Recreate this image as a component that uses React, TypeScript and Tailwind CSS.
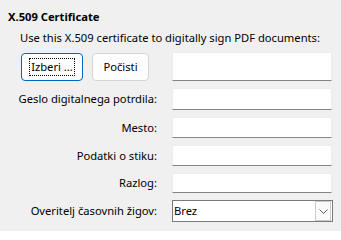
import React from "react";

const font = { fontFamily: '"Noto Sans", "Segoe UI", sans-serif' };

function Field({ h }: { h: string }) {
  return <div className={`w-[160px] ${h} bg-white border border-[#ececec] border-b-[#868686]`} />;
}

function Label({ children }: { children: React.ReactNode }) {
  return (
    <div className="flex items-center justify-end whitespace-nowrap text-[11.2px] leading-[16px] text-black">
      {children}
    </div>
  );
}

export default function App() {
  return (
    <div
      className="w-[341px] h-[231px] bg-[#f0f0f0] text-black overflow-hidden relative"
      style={font}
    >
      <div className="pt-[9px] pl-[8px] text-[11.2px] leading-[16px] font-bold">X.509 Certificate</div>
      <div className="pt-[5px] pl-[20px] text-[11.2px] leading-[16px] whitespace-nowrap">
        Use this X.509 certificate to digitally sign PDF documents:
      </div>
      <div className="mt-[6px] ml-[21px] grid grid-cols-[136px_160px] grid-rows-[29px_22px_21px_21px_20px_22px] gap-x-[15px] gap-y-[7px]">
        <div className="flex items-start gap-[9px] pt-[1px]">
          <button className="w-[62px] h-[28px] rounded-[4px] border border-[#0067c0] bg-[#fdfdfd] flex items-center justify-center text-[11.2px] leading-[16px]">
            <span className="border border-dotted border-black px-[1px]">Izberi ...</span>
          </button>
          <button className="w-[57px] h-[28px] rounded-[4px] border border-[#d4d4d4] bg-[#fdfdfd] flex items-center justify-center text-[11.2px] leading-[16px]">
            Počisti
          </button>
        </div>
        <Field h="h-[29px]" />

        <Label>Geslo digitalnega potrdila:</Label>
        <Field h="h-[22px]" />

        <Label>Mesto:</Label>
        <Field h="h-[21px]" />

        <Label>Podatki o stiku:</Label>
        <Field h="h-[21px]" />

        <Label>Razlog:</Label>
        <Field h="h-[20px]" />

        <Label>Overitelj časovnih žigov:</Label>
        <div className="w-[161px] h-[22px] bg-white border border-[#7a7a7a] flex items-center justify-between pl-[1px] pr-[1px]">
          <span className="text-[11.2px] leading-[16px]">Brez</span>
          <div className="w-[16px] h-[20px] border border-[#cccccc] bg-[#fafafa] flex items-center justify-center">
            <svg width="9" height="5" viewBox="0 0 9 5">
              <polyline points="0.5,0.5 4.5,4.5 8.5,0.5" fill="none" stroke="#606060" strokeWidth="1" />
            </svg>
          </div>
        </div>
      </div>
    </div>
  );
}
